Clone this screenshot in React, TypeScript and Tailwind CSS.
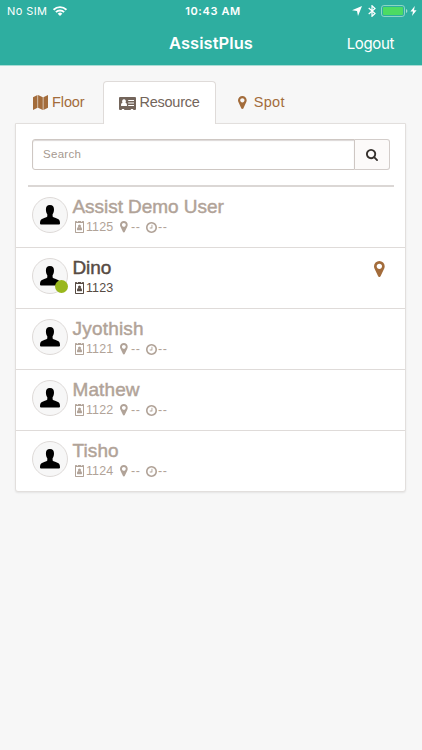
import React from "react";

const PERSON = "M9.9 0C7 0 5.8 2 5.9 4.7C6 6.9 6.6 8.2 7.3 9.2V11.6C6.6 12.8 3.4 13 1.5 14.3C.3 15.2 0 16.8 0 18.4Q0 19.5 1 19.5H19Q20 19.5 20 18.4C20 16.8 19.7 15.2 18.5 14.3C16.6 13 13.3 12.8 12.6 11.6V9.2C13.3 8.2 13.9 6.9 14 4.7C14.1 2 12.9 0 9.9 0Z";

function Marker({ className = "" }: { className?: string }) {
  return (
    <svg viewBox="0 128 1024 1536" fill="currentColor" className={className}>
      <path d="M768 640q0-106-75-181t-181-75-181 75-75 181 75 181 181 75 181-75 75-181zm256 0q0 109-33 179l-364 774q-16 33-47.5 52t-67.5 19-67.5-19-46.5-52l-365-774q-33-70-33-179 0-212 150-362t362-150 362 150 150 362z" />
    </svg>
  );
}

function Clock({ className = "" }: { className?: string }) {
  return (
    <svg viewBox="128 128 1536 1536" fill="currentColor" className={className}>
      <path d="M1024 544v448q0 14-9 23t-23 9h-320q-14 0-23-9t-9-23v-64q0-14 9-23t23-9h224v-352q0-14 9-23t23-9h64q14 0 23 9t9 23zm416 352q0-148-73-273t-198-198-273-73-273 73-198 198-73 273 73 273 198 198 273 73 273-73 198-198 73-273zm224 0q0 209-103 385.5t-279.5 279.5-385.5 103-385.5-103-279.5-279.5-103-385.5 103-385.5 279.5-279.5 385.5-103 385.5 103 279.5 279.5 103 385.5z" />
    </svg>
  );
}

function Badge() {
  return (
    <svg viewBox="0 0 9 12" fill="currentColor" className="h-3 w-[9px]">
      <path fillRule="evenodd" d="M0 .7Q0 0 .7 0H1.8V.8H3V0H6V.8H7.2V0H8.3Q9 0 9 .7V11.3Q9 12 8.3 12H.7Q0 12 0 11.3ZM1 2V11H8V2Z" />
      <circle cx="4.5" cy="4.9" r="1.5" />
      <path d="M2 8.8C2 7 2.5 6.3 3.4 6.1Q4.5 6.8 5.6 6.1C6.5 6.3 7 7 7 8.8Q7 9.2 6.6 9.2H2.4Q2 9.2 2 8.8Z" />
    </svg>
  );
}

function Wifi() {
  return (
    <svg viewBox="0 0 14 10" className="ml-[6px] h-[10px] w-[14px]" fill="none" stroke="currentColor" strokeWidth="1.9">
      <path d="M.6 3.8A9.1 9.1 0 0 1 13.4 3.8" />
      <path d="M2.9 6.2A5.8 5.8 0 0 1 11.1 6.2" />
      <path d="M7 10L4.7 7.7A3.3 3.3 0 0 1 9.3 7.7Z" fill="currentColor" stroke="none" />
    </svg>
  );
}

interface User {
  name: string;
  id: string;
  online?: boolean;
  tracking: string;
}

const users: User[] = [
  { name: "Assist Demo User", id: "1125", tracking: "tracking-[-0.05px]" },
  { name: "Dino", id: "1123", online: true, tracking: "tracking-[-0.1px]" },
  { name: "Jyothish", id: "1121", tracking: "tracking-[0.2px]" },
  { name: "Mathew", id: "1122", tracking: "tracking-[0.1px]" },
  { name: "Tisho", id: "1124", tracking: "tracking-[0.1px]" },
];

function Row({ user }: { user: User }) {
  return (
    <li className={`flex h-[61px] border-b border-[#dfdbd9] pl-4 last:border-b-0 ${user.online ? "text-[#574b43]" : "text-[#b1a398]"}`}>
      <div className="relative mt-[10px] flex size-9 shrink-0 justify-center rounded-full border border-[#dedad8] bg-[#f7f7f7] pt-[7px]">
        <svg viewBox="0 0 20 19.5" className="h-[19.5px] w-5" fill="#000"><path d={PERSON} /></svg>
        {user.online && <span className="absolute top-[21px] left-[22px] size-[13px] rounded-full bg-[#99b71d]" />}
      </div>
      <div className="ml-[4.5px] flex-1 pt-[9px]">
        <div className={`h-[21px] text-[19px] leading-[21px] [-webkit-text-stroke:0.45px_currentColor] ${user.tracking}`}>{user.name}</div>
        <div className="flex h-5 items-center pl-[2.5px] text-[12.5px] leading-5 tracking-[0.1px]">
          <Badge />
          <span className="ml-[2px] w-[34px]">{user.id}</span>
          {!user.online && (
            <>
              <Marker className="h-[11.5px] w-[7.7px]" />
              <span className="ml-[3.3px] w-[15px] tracking-[0.6px]">--</span>
              <Clock className="h-[11px] w-[11px]" />
              <span className="ml-[1px] tracking-[0.6px]">--</span>
            </>
          )}
        </div>
      </div>
      {user.online && <Marker className="mt-[13px] mr-5 h-4 w-[10.7px] text-[#a36c3b]" />}
    </li>
  );
}

export default function App() {
  return (
    <div className="h-[750px] w-full overflow-hidden bg-[#f7f7f7] font-['Liberation_Sans',Arial,sans-serif]">
      <header className="h-[66px] border-b border-[#a9dcd5] bg-[#2eaea0] text-white">
        <div className="grid h-[22px] grid-cols-[1fr_auto_1fr] items-center px-[7px] font-['Inter',sans-serif] text-[11px]">
          <div className="flex items-center tracking-[0.4px]">No SIM<Wifi /></div>
          <div className="pl-[4px] font-semibold tracking-[0.6px]">10:43 AM</div>
          <div className="-mr-[2px] flex items-center justify-end">
            <svg viewBox="0 0 10 10" className="size-[10px]" fill="currentColor"><path d="M10 0L6 10L5 5L0 4.2Z" /></svg>
            <svg viewBox="0 0 8 12" className="ml-[6px] h-3 w-2" fill="none" stroke="currentColor" strokeWidth="1.2"><path d="M.7 3L7 8.5L4 11.3V.7L7 3.5L.7 9" /></svg>
            <svg viewBox="0 0 27 12" className="ml-[5px] h-3 w-[27px]"><rect x=".5" y=".5" width="23" height="11" rx="2.4" fill="none" stroke="#a4dfce" strokeWidth=".8" /><rect x="2" y="2" width="20" height="8" rx="1" fill="#4cdb63" /><path d="M25 4Q26.4 4.5 26.4 6T25 8Z" fill="#a4dfce" /></svg>
            <svg viewBox="0 0 7 10" className="ml-[2px] h-[10px] w-[7px]" fill="currentColor"><path d="M4.8 0L.4 5.5H3L2 10L6.6 4.3H4Z" /></svg>
          </div>
        </div>
        <div className="grid h-[43px] grid-cols-[1fr_auto_1fr] items-center">
          <span />
          <h1 className="font-['Inter',sans-serif] text-[16.5px] font-semibold tracking-[0.05px]">AssistPlus</h1>
          <button className="justify-self-end pt-px pr-[28px] font-['Inter',sans-serif] text-[15px] tracking-[-0.35px]">Logout</button>
        </div>
      </header>

      <main className="pt-[15px] pr-4 pl-[15px]">
        <nav className="relative z-10 -mb-px flex h-[43px] text-[14.5px]">
          <button className="flex w-[88px] items-center gap-1 pl-[18px] text-[#a36c3b]">
            <svg viewBox="0 0 15 15" className="h-[15px] w-[15px]" fill="currentColor"><path d="M0 2.3L4.5 0V12.7L0 15ZM5.1 0L9.8 2.3V15L5.1 12.7ZM10.4 2.3L15 0V12.7L10.4 15Z" /></svg>
            <span className="tracking-[-0.1px]">Floor</span>
          </button>
          <button className="flex w-[113px] items-center gap-1 rounded-t border border-b-0 border-[#dfdbd9] bg-white pl-[15px] text-[#73655b]">
            <svg viewBox="0 0 17 13" className="h-[13px] w-[17px]" fill="currentColor"><path fillRule="evenodd" d="M0 1Q0 0 1 0H16Q17 0 17 1V12Q17 13 16 13H14.2V12H11.8V13H5.2V12H2.8V13H1Q0 13 0 12ZM2 8.5Q2 9 2.5 9H7.5Q8 9 8 8.5C8 6.7 7.4 6 6.5 5.8C7.5 4.4 6.6 2.3 5 2.3S2.5 4.4 3.5 5.8C2.6 6 2 6.7 2 8.5ZM9.2 3V4H15V3ZM9.2 5.5V6.5H15V5.5ZM9.2 8V9H15V8Z" /></svg>
            <span className="-ml-[0.5px] tracking-[-0.25px]">Resource</span>
          </button>
          <button className="flex items-center pl-[22px] text-[#a36c3b]">
            <Marker className="h-[13px] w-[8.7px]" />
            <span className="ml-[7px] tracking-[0.35px]">Spot</span>
          </button>
        </nav>
        <section className="h-[369px] rounded-b-[3px] border border-[#e2dfdd] bg-white shadow-[0_1px_2px_rgba(0,0,0,0.08)]">
          <div className="mt-[15px] mr-[15px] ml-4 flex h-[31px]">
            <input placeholder="Search" className="min-w-0 flex-1 rounded-l-[3px] border border-[#cec7c3] bg-white px-[10px] text-[11.5px] tracking-[0.3px] shadow-[inset_0_1px_1px_rgba(80,60,50,0.2)] placeholder:text-[#a69990]" />
            <button className="flex w-[35px] items-center justify-center rounded-r-[3px] border border-l-0 border-[#d3cdca] bg-[#fcfaf9] text-[#35302c]">
              <svg viewBox="64 128 1664 1664" className="size-3" fill="currentColor"><path d="M1216 832q0-185-131.5-316.5t-316.5-131.5-316.5 131.5-131.5 316.5 131.5 316.5 316.5 131.5 316.5-131.5 131.5-316.5zm512 832q0 52-38 90t-90 38q-54 0-90-38l-343-342q-179 124-399 124-143 0-273.5-55.5t-225-150-150-225-55.5-273.5 55.5-273.5 150-225 225-150 273.5-55.5 273.5 55.5 225 150 150 225 55.5 273.5q0 220-124 399l343 343q37 37 37 90z" /></svg>
            </button>
          </div>
          <div className="mt-[15px] mr-[11px] ml-3 h-[2px] bg-[#dbd7d5]" />
          <ul>{users.map((user) => <Row key={user.id} user={user} />)}</ul>
        </section>
      </main>
    </div>
  );
}
